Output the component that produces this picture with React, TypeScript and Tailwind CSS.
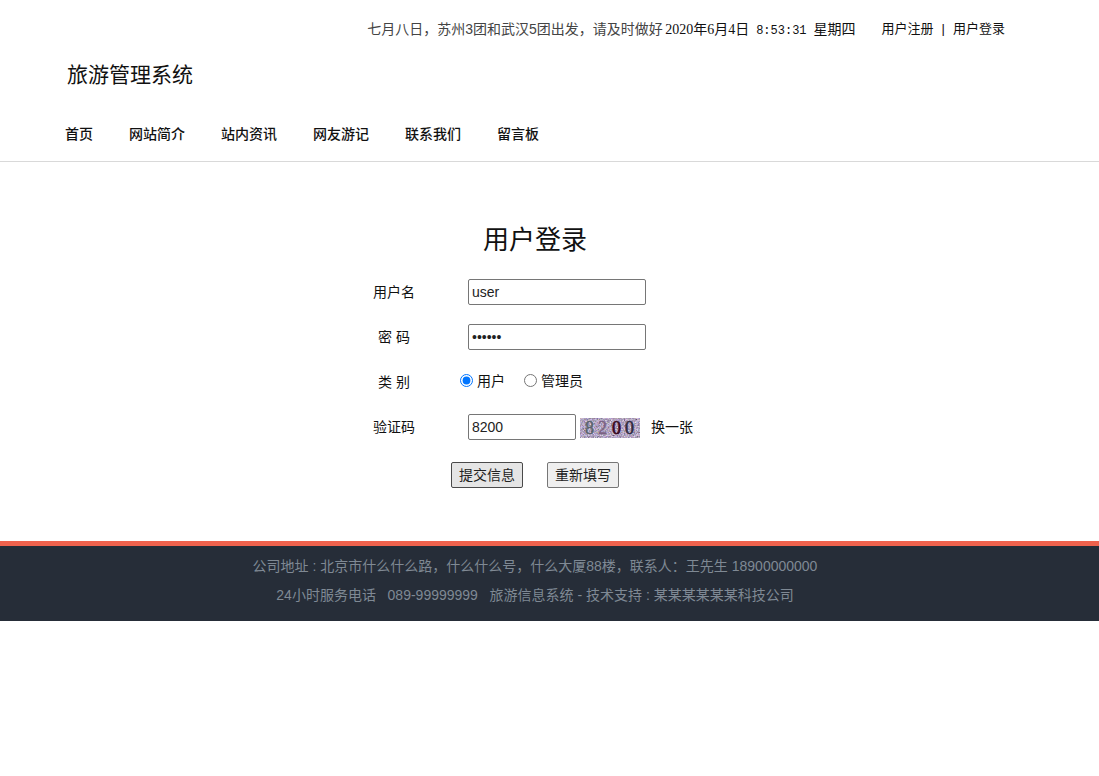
import React from "react";

const navItems = ["首页", "网站简介", "站内资讯", "网友游记", "联系我们", "留言板"];

const fieldClass =
  "h-[26px] rounded-xs border border-[#767676] bg-white px-[3px] text-sm text-[#222]";

const buttonClass = "h-[26px] w-18 rounded-xs border text-sm text-[#222]";

const Captcha = () => {
  return (
    <svg width="60" height="20" viewBox="0 0 60 20" role="img" aria-label="验证码 8200">
      <filter id="grain" x="0" y="0" width="100%" height="100%" colorInterpolationFilters="sRGB">
        <feTurbulence type="fractalNoise" baseFrequency="0.7" numOctaves="3" seed="8" />
        <feColorMatrix values="0.8 0.5 0.3 0 -0.11  0.4 0.8 0.3 0 -0.12  0.4 0.4 0.8 0 -0.05  0 0 0 0 1" />
      </filter>
      <rect width="60" height="20" fill="#b9b1c6" />
      <rect width="60" height="20" filter="url(#grain)" opacity="0.7" />
      <g fontFamily="Liberation Serif, serif" fontSize="18">
        <text x="5" y="16" fill="#59646c" stroke="#59646c" strokeWidth="0.4">8</text>
        <text x="18" y="16" fill="#7b6284" stroke="#7b6284" strokeWidth="0.4">2</text>
        <text x="32" y="16" fill="#38081e" stroke="#38081e" strokeWidth="0.7">0</text>
        <text x="45" y="16" fill="#302b3e" stroke="#302b3e" strokeWidth="0.6">0</text>
      </g>
    </svg>
  );
};

const Header = () => {
  return (
    <header className="border-b border-[#d9d9d9] pt-[17px] pr-[29px] pb-[17px]">
      <div className="mx-auto max-w-[940px]">
        <div className="flex h-6 items-center justify-end whitespace-nowrap">
          <div className="w-[298px] overflow-hidden text-sm text-[#444]">
            七月八日，苏州3团和武汉5团出发，请及时做好
          </div>
          <div className="flex items-baseline text-sm">
            <span className="font-['Liberation_Serif','Noto_Sans_CJK_SC',serif]">
              2020年6月4日
            </span>
            <span className="mx-[7px] font-['Liberation_Mono',monospace] text-xs">8:53:31</span>
            <span>星期四</span>
          </div>
          <div className="ml-[26px] text-[13px]">
            <a href="#register">用户注册</a>
            <span className="mx-2">|</span>
            <a href="#login">用户登录</a>
          </div>
        </div>
        <div className="mt-[18px] pl-0.5 text-[21px] leading-8">旅游管理系统</div>
        <nav className="mt-[33px] flex gap-9 text-sm leading-5 font-medium">
          {navItems.map((item) => (
            <a href="#" key={item}>
              {item}
            </a>
          ))}
        </nav>
      </div>
    </header>
  );
};

const Row = ({
  label,
  htmlFor,
  children,
}: {
  label: string;
  htmlFor?: string;
  children: React.ReactNode;
}) => {
  return (
    <div className="flex h-[26px] items-center">
      <label htmlFor={htmlFor} className="w-[122px] text-center">
        {label}
      </label>
      {children}
    </div>
  );
};

const LoginForm = () => {
  return (
    <main className="pt-[62px] pr-[29px] pb-[53px]">
      <h1 className="text-center text-[26px] leading-8">用户登录</h1>
      <form
        className="mx-auto mt-[23px] flex max-w-[404px] flex-col gap-[19px] text-sm"
        onSubmit={(e) => e.preventDefault()}
      >
        <Row label="用户名" htmlFor="username">
          <input id="username" type="text" defaultValue="user" className={`${fieldClass} ml-[13px] w-[178px]`} />
        </Row>
        <Row label="密 码" htmlFor="password">
          <input id="password" type="password" defaultValue="123456" className={`${fieldClass} ml-[13px] w-[178px]`} />
        </Row>
        <Row label="类 别">
          <label className="ml-[5px] flex items-center gap-1 pb-[3px]">
            <input type="radio" name="role" defaultChecked className="size-[13px]" />
            用户
          </label>
          <label className="ml-[19px] flex items-center gap-1 pb-[3px]">
            <input type="radio" name="role" className="size-[13px]" />
            管理员
          </label>
        </Row>
        <Row label="验证码" htmlFor="code">
          <input id="code" type="text" defaultValue="8200" className={`${fieldClass} ml-[13px] w-[108px]`} />
          <span className="ml-1 pt-0.5">
            <Captcha />
          </span>
          <a href="#refresh" className="ml-[11px]">
            换一张
          </a>
        </Row>
        <div className="mt-[3px] flex justify-center gap-6">
          <button type="submit" className={`${buttonClass} border-[#4a4a4a] bg-[#e5e5e5]`}>
            提交信息
          </button>
          <button type="reset" className={`${buttonClass} border-[#767676] bg-[#efefef]`}>
            重新填写
          </button>
        </div>
      </form>
    </main>
  );
};

const Footer = () => {
  return (
    <footer className="border-t-5 border-[#f0624d] bg-[#262d38] pt-1.5 pr-[29px] pb-[11px] text-center text-sm leading-[29px] text-[#7f8994]">
      <p>公司地址 : 北京市什么什么路，什么什么号，什么大厦88楼，联系人：王先生 18900000000</p>
      <p className="whitespace-pre-wrap">24小时服务电话   089-99999999   旅游信息系统 - 技术支持 : 某某某某某某科技公司</p>
    </footer>
  );
};

export default function App() {
  return (
    <div className="bg-white font-['Liberation_Sans','Noto_Sans_CJK_SC',sans-serif] text-[#111]">
      <Header />
      <LoginForm />
      <Footer />
    </div>
  );
}
